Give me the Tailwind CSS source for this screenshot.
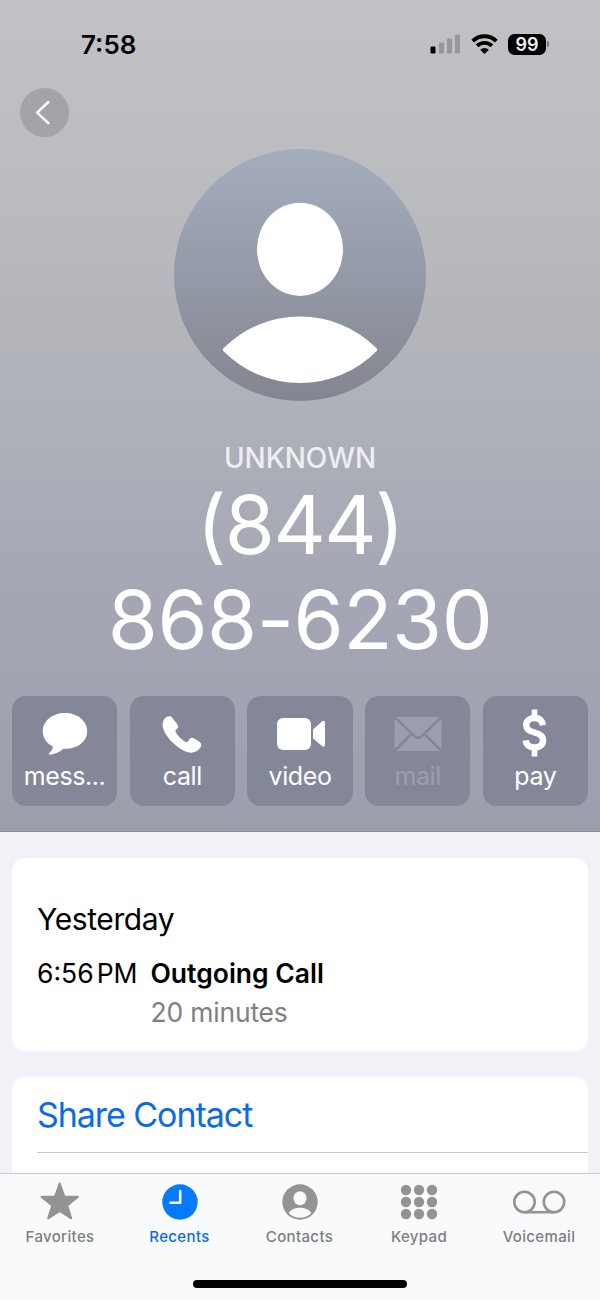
<!DOCTYPE html>
<html lang="en">
  <head>
    <meta charset="UTF-8" />
    <meta name="viewport" content="width=device-width, initial-scale=1.0" />
    <title>Contact</title>
    <script src="https://cdn.jsdelivr.net/npm/@tailwindcss/browser@4"></script>
  </head>
  <body class="bg-[#f2f1f7]">
    <div class="flex flex-col w-[600px] h-[1300px] overflow-hidden font-['Inter',sans-serif] text-black">
      <!-- Header -->
      <header class="flex flex-col shrink-0 h-[832px] border-b border-[#8b8d99] bg-[linear-gradient(to_bottom,#c2c2c6_0%,#b9babe_28%,#adb0b8_52%,#a5a7b4_70%,#a1a3b0_85%,#9b9eab_100%)]">
        <div class="flex items-center justify-between h-[88px] pl-[81px] pr-[51px]">
          <p class="text-[26px] font-semibold pt-px">7:58</p>
          <div class="flex items-center">
            <svg class="w-[31px] h-[20px]" viewBox="0 0 31 20">
              <rect x="0.5" y="12.5" width="5" height="7" rx="1.3" fill="#000" />
              <g fill="#98989c">
                <rect x="9" y="8.5" width="5" height="11" rx="1.3" />
                <rect x="17" y="4.5" width="5" height="15" rx="1.3" />
                <rect x="25" y="0.5" width="5" height="19" rx="1.3" />
              </g>
            </svg>
            <svg class="w-[27px] h-[20px] ml-[10px]" viewBox="0 0 27 20" fill="none" stroke="#000" stroke-width="3.9">
              <path d="M1.7 7.1a16.8 16.8 0 0 1 23.6 0" />
              <path d="M6.1 11.9a10.6 10.6 0 0 1 14.8 0" />
              <path d="M13.5 20l-4.300-4.300a6.200 6.200 0 0 1 8.600 0z" fill="#000" stroke="none" />
            </svg>
            <div class="flex items-center justify-center w-[38px] h-[21px] ml-[10px] rounded-[6.5px] bg-black text-[#eeeef0] text-[18px] font-semibold">99</div>
            <div class="w-[2px] h-[6px] ml-[1px] rounded-r-full bg-[#77777b]"></div>
          </div>
        </div>

        <div class="flex items-start h-[61px] pl-5">
          <button class="flex items-center justify-center size-[49px] rounded-full bg-[#a3a4a7]">
            <svg class="size-[49px]" viewBox="0 0 49 49" fill="none" stroke="#fff" stroke-width="2.5" stroke-linecap="round" stroke-linejoin="round">
              <path d="M28.3 14L17.2 24.6L28.3 35.2" />
            </svg>
          </button>
        </div>

        <svg class="size-[252px] mx-auto" viewBox="0 0 252 252">
          <defs>
            <linearGradient id="avatar" x1="0" y1="0" x2="0" y2="1">
              <stop offset="0" stop-color="#a5adbd" />
              <stop offset="1" stop-color="#838690" />
            </linearGradient>
          </defs>
          <circle cx="126" cy="126" r="126" fill="url(#avatar)" />
          <ellipse cx="126" cy="100.3" rx="43" ry="46.6" fill="#fff" />
          <path d="M49.500 199.200A108 108 0 0 1 202.500 199.200Q204 200.800 202.500 202.300A108 108 0 0 1 49.500 202.300Q48 200.800 49.500 199.200z" fill="#fff" />
        </svg>

        <div class="pt-[38px] text-center">
          <p class="text-[28px] leading-[38px] font-medium text-[#edeef1] tracking-[-0.1px]">UNKNOWN</p>
          <h1 class="pt-px -mb-px text-[81px] leading-[95px] text-white tracking-[-0.5px]"><span class="tracking-[-1.5px]">(844)</span><br />868-6230</h1>
        </div>

        <div class="grid grid-cols-5 gap-[12.5px] px-3 pt-[29px] text-center text-[25px] leading-[33px] tracking-[-0.4px] text-white">
          <button class="flex flex-col items-center h-[110px] pt-[12px] rounded-[14px] bg-[#848797]">
            <svg class="w-[60px] h-[52px]" viewBox="0 0 60 52" fill="#fff">
              <path d="M30 5C17.600 5 7.800 13 7.800 23.200C7.800 29.800 11.700 35.500 17.800 38.300C17.900 41 16.400 43.200 14.600 44.600C13.300 45.800 14 47 15.600 46.700C20.500 46 25.500 43.600 28.500 40.800C42 41.500 52.200 33.500 52.200 23.200C52.200 13 42.400 5 30 5z" />
            </svg>
            <span>mess...</span>
          </button>
          <button class="flex flex-col items-center h-[110px] pt-[12px] rounded-[14px] bg-[#848797]">
            <svg class="w-[60px] h-[52px]" viewBox="0 0 60 52" fill="#fff">
              <path d="M12.200 11.200C14.300 8.300 18.200 7.300 20.200 9.700L25.300 16.300C26.800 18.300 26.300 19.900 24.600 21.200C23.300 22.300 23.200 23.300 24 24.700C26.700 28.700 29.500 31.400 33.200 33.700C34.500 34.400 35.200 34.100 36.200 32.900L37.300 31.400C38.500 29.800 40.400 29.300 42.300 30.500L47.300 33.800C49.600 35.500 49.800 37.400 48.400 39.600C44.800 45.300 38.200 46.200 31.500 42.600C23.200 38.100 14.600 29.300 11.800 22.200C10.200 18.100 10 14.300 12.200 11.200z" />
            </svg>
            <span>call</span>
          </button>
          <button class="flex flex-col items-center h-[110px] pt-[12px] rounded-[14px] bg-[#848797]">
            <svg class="w-[60px] h-[52px]" viewBox="0 0 60 52" fill="#fff">
              <rect x="7" y="10" width="34" height="32" rx="6" />
              <path d="M43 21.500L52 13.500Q55 11.500 55 15V36.500Q55 40 52 38L43 30.500z" />
            </svg>
            <span>video</span>
          </button>
          <button class="flex flex-col items-center h-[110px] pt-[12px] rounded-[14px] bg-[#848797] text-[#9c9eac]">
            <svg class="w-[60px] h-[52px]" viewBox="0 0 60 52">
              <rect x="6.500" y="9" width="47" height="34" rx="2.500" fill="#9c9eac" />
              <path d="M6 8.500L26.500 28.200Q30 31.200 33.500 28.200L54 8.500M6 43.500L23 26.500M54 43.500L37 26.500" fill="none" stroke="#848797" stroke-width="2.600" />
            </svg>
            <span>mail</span>
          </button>
          <button class="flex flex-col items-center h-[110px] pt-[12px] rounded-[14px] bg-[#848797]">
            <svg class="w-[60px] h-[52px]" viewBox="0 0 60 52" fill="none" stroke="#fff">
              <path d="M29.500 1.500V10M29.500 40V48.500" stroke-width="5.600" />
              <path d="M38 17.300C37.200 12.600 34.500 10 29.700 10C24.700 10 21.200 12.700 21.200 17.100C21.200 21.300 23.700 23.100 29.500 24.500C35.500 26 38.100 28.200 38.100 32.300C38.100 36.800 34.900 39.400 29.600 39.400C24.100 39.400 21.200 36.800 20.600 32.300" stroke-width="6.400" />
            </svg>
            <span>pay</span>
          </button>
        </div>
      </header>

      <!-- Call history -->
      <main class="flex flex-col flex-1 min-h-0 gap-[26px] px-3 pt-[26px] overflow-hidden">
        <section class="shrink-0 h-[193px] pl-[25px] pt-[41px] rounded-[13px] bg-white">
          <h2 class="text-[30px] leading-[40px] tracking-[-0.4px]">Yesterday</h2>
          <div class="flex pt-[15px] text-[26.500px] leading-[39px]">
            <p class="w-[113.5px] whitespace-nowrap">6:56<span class="ml-[3px]">PM</span></p>
            <div>
              <p class="font-semibold">Outgoing Call</p>
              <p class="text-[#7f7f83] tracking-[-0.2px]">20 minutes</p>
            </div>
          </div>
        </section>
        <section class="shrink-0 h-[140px] pl-[25px] rounded-[13px] bg-white">
          <a class="flex items-center h-[76px] border-b border-[#c8c8ca] text-[34px] tracking-[-1.05px] text-[#0b6be6]">Share Contact</a>
        </section>
      </main>

      <!-- Tab bar -->
      <footer class="shrink-0 h-[127px] border-t border-[#c9caca] bg-[#f9fafc]">
        <nav class="grid grid-cols-[120px_119px_121px_118px_122px] h-[106px] pt-[8px] text-[15px] leading-[20px] font-medium tracking-[0.35px] text-[#7d7e80]">
          <a class="flex flex-col items-center gap-[5px]">
            <svg class="w-[60px] h-[40px]" viewBox="0 0 60 40" fill="#929395" stroke="#929395" stroke-width="2" stroke-linejoin="round">
              <path d="M29.700 1.500L34.400 14.500L48 14.800L37.300 23.500L41.200 36.300L29.700 28.900L18.200 36.300L22.100 23.500L11.400 14.800L25 14.500z" />
            </svg>
            Favorites
          </a>
          <a class="flex flex-col items-center gap-[5px] text-[#0b6be6]">
            <svg class="w-[60px] h-[40px]" viewBox="0 0 60 40">
              <circle cx="30" cy="20" r="17.700" fill="#047aff" />
              <path d="M30.200 9V20.800H20.500" fill="none" stroke="#f9fafc" stroke-width="2.500" stroke-linecap="round" stroke-linejoin="round" />
            </svg>
            Recents
          </a>
          <a class="flex flex-col items-center gap-[5px]">
            <svg class="w-[60px] h-[40px]" viewBox="0 0 60 40">
              <circle cx="30" cy="20" r="17.700" fill="#929395" />
              <ellipse cx="30" cy="16.300" rx="6.500" ry="7" fill="#f9fafc" />
              <path d="M18.700 31C21 27.700 25.500 25.800 30 25.800S39 27.700 41.300 31C38.500 34 34.500 35.700 30 35.700S21.500 34 18.700 31z" fill="#f9fafc" />
            </svg>
            Contacts
          </a>
          <a class="flex flex-col items-center gap-[5px]">
            <svg class="w-[60px] h-[40px]" viewBox="0 0 60 40" fill="#929395">
              <circle cx="17" cy="8" r="5.200" />
              <circle cx="30" cy="8" r="5.200" />
              <circle cx="43" cy="8" r="5.200" />
              <circle cx="17" cy="20" r="5.200" />
              <circle cx="30" cy="20" r="5.200" />
              <circle cx="43" cy="20" r="5.200" />
              <circle cx="17" cy="32" r="5.200" />
              <circle cx="30" cy="32" r="5.200" />
              <circle cx="43" cy="32" r="5.200" />
            </svg>
            Keypad
          </a>
          <a class="flex flex-col items-center gap-[5px]">
            <svg class="w-[60px] h-[40px]" viewBox="0 0 60 40" fill="none" stroke="#929395" stroke-width="2.600">
              <circle cx="15.500" cy="20" r="10.200" />
              <circle cx="45" cy="20" r="10.200" />
              <path d="M15.500 30.200H45" />
            </svg>
            Voicemail
          </a>
        </nav>
        <div class="w-[214px] h-[8px] mx-auto rounded-full bg-black"></div>
      </footer>
    </div>
  </body>
</html>
